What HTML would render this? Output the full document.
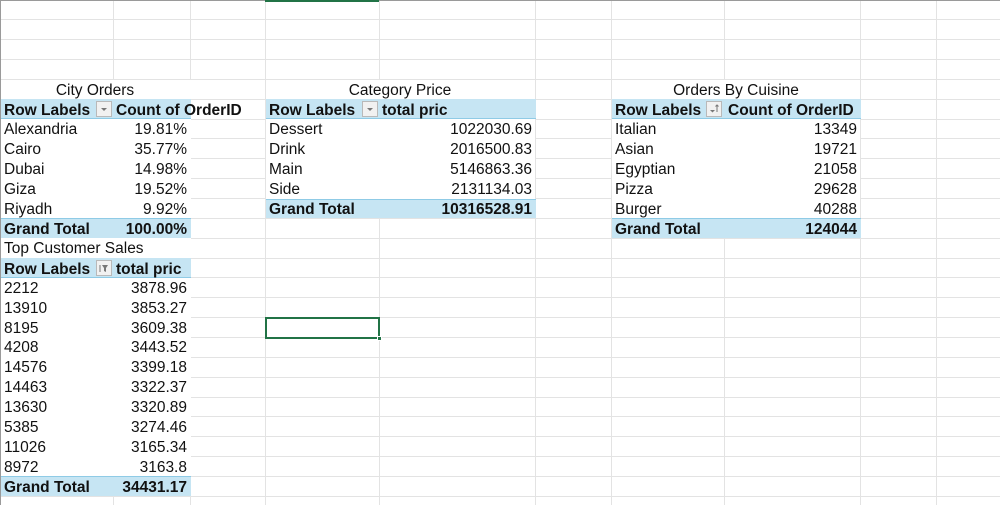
<!DOCTYPE html>
<html><head><meta charset="utf-8"><style>
*{margin:0;padding:0;box-sizing:border-box}
body{width:1000px;height:505px;overflow:hidden;background:#fff;position:relative;font-family:"Liberation Sans",Arial,sans-serif;font-size:15.5px;color:#111}
.h{position:absolute;left:0;width:1000px;height:1px;background:#e3e3e3;z-index:0}
.v{position:absolute;top:0;height:505px;width:1px;background:#e3e3e3;z-index:0}
.w{position:absolute;background:#fff;z-index:1}
.band{position:absolute;background:#c6e5f3;z-index:2}
.t{position:absolute;height:19.85px;line-height:21px;white-space:nowrap;z-index:4}
.r{text-align:right}
.b{font-weight:bold}
.btn{position:absolute;width:16px;height:16px;background:#f1f1f1;border:1px solid #b9b9b9;z-index:5}
</style></head><body>
<div id="g"></div>
<script>
var g=document.getElementById('g'),s='';
for(var k=1;k<26;k++)s+='<div class="h" style="top:'+(k*19.85-0.5).toFixed(2)+'px"></div>';
[113,190,265,379,535,611,724,860,936].forEach(function(x){s+='<div class="v" style="left:'+x+'px"></div>'});
g.innerHTML=s;
</script>
<div style="position:absolute;left:0;top:0;width:1000px;height:1px;background:#9a9a9a;z-index:6"></div>
<div style="position:absolute;left:0;top:0;width:1px;height:505px;background:#9a9a9a;z-index:6"></div>
<div style="position:absolute;left:265px;top:0;width:114px;height:2px;background:#217346;z-index:6"></div>

<div class="w" style="left:1px;top:80px;width:190px;height:416px"></div>
<div class="w" style="left:266px;top:80px;width:269px;height:138px"></div>
<div class="w" style="left:612px;top:80px;width:248px;height:158px"></div>

<div class="band" style="left:1px;top:99.25px;width:190px;height:19.85px;border-bottom:1px solid #8fcbe6"></div>
<div class="band" style="left:1px;top:218.35px;width:190px;height:19.85px;border-top:1px solid #8fcbe6"></div>
<div class="band" style="left:1px;top:258.05px;width:190px;height:19.85px;border-bottom:1px solid #8fcbe6"></div>
<div class="band" style="left:1px;top:476.4px;width:190px;height:19.85px;border-top:1px solid #8fcbe6"></div>
<div class="band" style="left:266px;top:99.25px;width:270px;height:19.85px;border-bottom:1px solid #8fcbe6"></div>
<div class="band" style="left:266px;top:198.5px;width:270px;height:19.85px;border-top:1px solid #8fcbe6"></div>
<div class="band" style="left:612px;top:99.25px;width:249px;height:19.85px;border-bottom:1px solid #8fcbe6"></div>
<div class="band" style="left:612px;top:218.35px;width:249px;height:19.85px;border-top:1px solid #8fcbe6"></div>

<div style="position:absolute;left:265px;top:316.6px;width:115px;height:22px;border:2px solid #217346;z-index:6"></div>
<div style="position:absolute;left:377px;top:335.5px;width:5px;height:5px;background:#217346;border:1px solid #fff;z-index:7"></div>

<div class="t" style="left:0;width:190px;top:80px;text-align:center">City Orders</div>
<div class="t b" style="left:4px;top:100px">Row Labels</div>
<div class="btn" style="left:96px;top:101px"><svg width="14" height="14"><path d="M4 6h6l-3 3z" fill="#777"/></svg></div>
<div class="t b" style="left:116px;top:100px">Count of OrderID</div>
<div class="t" style="left:4px;top:119.1px">Alexandria</div><div class="t r" style="left:113px;width:74px;top:119.1px">19.81%</div>
<div class="t" style="left:4px;top:138.95px">Cairo</div><div class="t r" style="left:113px;width:74px;top:138.95px">35.77%</div>
<div class="t" style="left:4px;top:158.8px">Dubai</div><div class="t r" style="left:113px;width:74px;top:158.8px">14.98%</div>
<div class="t" style="left:4px;top:178.65px">Giza</div><div class="t r" style="left:113px;width:74px;top:178.65px">19.52%</div>
<div class="t" style="left:4px;top:198.5px">Riyadh</div><div class="t r" style="left:113px;width:74px;top:198.5px">9.92%</div>
<div class="t b" style="left:4px;top:219px">Grand Total</div><div class="t r b" style="left:113px;width:74px;top:219px">100.00%</div>

<div class="t" style="left:4px;top:238.2px">Top Customer Sales</div>
<div class="t b" style="left:4px;top:258.5px">Row Labels</div>
<div class="btn" style="left:96px;top:260px"><svg width="14" height="14"><path d="M5 4h6l-2 3v4l-2-1V7z" fill="#777"/><path d="M3 4v7" stroke="#777"/></svg></div>
<div class="t b" style="left:116px;top:258.5px">total pric</div>
<div class="t" style="left:4px;top:277.9px">2212</div><div class="t r" style="left:113px;width:74px;top:277.9px">3878.96</div>
<div class="t" style="left:4px;top:297.75px">13910</div><div class="t r" style="left:113px;width:74px;top:297.75px">3853.27</div>
<div class="t" style="left:4px;top:317.6px">8195</div><div class="t r" style="left:113px;width:74px;top:317.6px">3609.38</div>
<div class="t" style="left:4px;top:337.45px">4208</div><div class="t r" style="left:113px;width:74px;top:337.45px">3443.52</div>
<div class="t" style="left:4px;top:357.3px">14576</div><div class="t r" style="left:113px;width:74px;top:357.3px">3399.18</div>
<div class="t" style="left:4px;top:377.15px">14463</div><div class="t r" style="left:113px;width:74px;top:377.15px">3322.37</div>
<div class="t" style="left:4px;top:397px">13630</div><div class="t r" style="left:113px;width:74px;top:397px">3320.89</div>
<div class="t" style="left:4px;top:416.85px">5385</div><div class="t r" style="left:113px;width:74px;top:416.85px">3274.46</div>
<div class="t" style="left:4px;top:436.7px">11026</div><div class="t r" style="left:113px;width:74px;top:436.7px">3165.34</div>
<div class="t" style="left:4px;top:456.55px">8972</div><div class="t r" style="left:113px;width:74px;top:456.55px">3163.8</div>
<div class="t b" style="left:4px;top:477px">Grand Total</div><div class="t r b" style="left:113px;width:74px;top:477px">34431.17</div>

<div class="t" style="left:265px;width:270px;top:80px;text-align:center">Category Price</div>
<div class="t b" style="left:269px;top:100px">Row Labels</div>
<div class="btn" style="left:362px;top:101px"><svg width="14" height="14"><path d="M4 6h6l-3 3z" fill="#777"/></svg></div>
<div class="t b" style="left:382px;top:100px">total pric</div>
<div class="t" style="left:269px;top:119.1px">Dessert</div><div class="t r" style="left:379px;width:153px;top:119.1px">1022030.69</div>
<div class="t" style="left:269px;top:138.95px">Drink</div><div class="t r" style="left:379px;width:153px;top:138.95px">2016500.83</div>
<div class="t" style="left:269px;top:158.8px">Main</div><div class="t r" style="left:379px;width:153px;top:158.8px">5146863.36</div>
<div class="t" style="left:269px;top:178.65px">Side</div><div class="t r" style="left:379px;width:153px;top:178.65px">2131134.03</div>
<div class="t b" style="left:269px;top:199px">Grand Total</div><div class="t r b" style="left:379px;width:153px;top:199px">10316528.91</div>

<div class="t" style="left:612px;width:248px;top:80px;text-align:center">Orders By Cuisine</div>
<div class="t b" style="left:615px;top:100px">Row Labels</div>
<div class="btn" style="left:706px;top:101px"><svg width="14" height="14"><path d="M3 8h5l-2.5 2.5z" fill="#777"/><path d="M10 3v7M8.5 4.5L10 3l1.5 1.5" stroke="#777" fill="none"/></svg></div>
<div class="t b" style="left:728px;top:100px">Count of OrderID</div>
<div class="t" style="left:615px;top:119.1px">Italian</div><div class="t r" style="left:724px;width:133px;top:119.1px">13349</div>
<div class="t" style="left:615px;top:138.95px">Asian</div><div class="t r" style="left:724px;width:133px;top:138.95px">19721</div>
<div class="t" style="left:615px;top:158.8px">Egyptian</div><div class="t r" style="left:724px;width:133px;top:158.8px">21058</div>
<div class="t" style="left:615px;top:178.65px">Pizza</div><div class="t r" style="left:724px;width:133px;top:178.65px">29628</div>
<div class="t" style="left:615px;top:198.5px">Burger</div><div class="t r" style="left:724px;width:133px;top:198.5px">40288</div>
<div class="t b" style="left:615px;top:219px">Grand Total</div><div class="t r b" style="left:724px;width:133px;top:219px">124044</div>
</body></html>
